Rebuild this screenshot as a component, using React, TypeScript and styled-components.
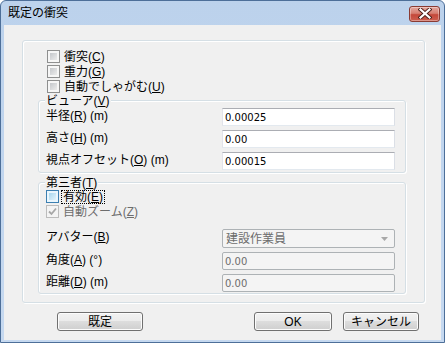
import styled, { createGlobalStyle, css } from 'styled-components';

const UI_FONT = `'Liberation Sans', 'Noto Sans CJK JP', sans-serif`;
const NUM_FONT = `'DejaVu Sans', 'Noto Sans CJK JP', sans-serif`;

type CheckVariant = 'normal' | 'hot' | 'disabledChecked';

const GlobalStyle = createGlobalStyle`
  * { box-sizing: border-box; }
  html, body { margin: 0; padding: 0; }
  body {
    background: #ffffff;
    font-family: ${UI_FONT};
    font-size: 12px;
    color: #000;
    overflow: hidden;
  }
`;

const Window = styled.div`
  width: 445px;
  height: 343px;
  display: flex;
  flex-direction: column;
  border: 1px solid #4d6f99;
  border-radius: 6px 6px 0 0;
  background: linear-gradient(#bcd2ec, #c6d9f0);
  overflow: hidden;
`;

const TitleBar = styled.div`
  height: 24px;
  flex: none;
  display: flex;
  align-items: center;
  justify-content: space-between;
  padding: 0 4px 0 7px;
`;

const Title = styled.span`
  font-size: 12px;
  line-height: 16px;
  color: #000;
`;

const CloseButton = styled.div`
  width: 31px;
  height: 16px;
  margin-top: 1px;
  display: flex;
  align-items: center;
  justify-content: center;
  border: 1px solid #8a3b33;
  border-radius: 3px;
  background: linear-gradient(#e4a79e 0%, #d77f72 45%, #c4483a 55%, #cd5f50 100%);
  box-shadow: inset 0 0 0 1px rgba(255, 255, 255, 0.35);
`;

const Client = styled.div`
  flex: 1;
  margin: 0 3px 2px;
  background: #f0f0f0;
  display: flex;
  flex-direction: column;
`;

const groupLine = css`
  border: 1px solid #d5dfe5;
  border-radius: 3px;
  box-shadow: inset 1px 1px 0 #ffffff, 1px 1px 0 #ffffff;
`;

const OuterGroup = styled.div`
  ${groupLine};
  width: 403px;
  height: 263px;
  margin: 15px 0 0 18px;
  padding: 9px 0 0 24px;
  display: flex;
  flex-direction: column;
`;

const GroupBox = styled.div<{ $height: number; $gap: number }>`
  ${groupLine};
  position: relative;
  width: 368px;
  height: ${({ $height }) => $height}px;
  margin: ${({ $gap }) => $gap}px 0 0 -9px;
  padding: 7px 10px 1px 7px;
`;

const Legend = styled.span`
  position: absolute;
  top: -7px;
  left: 6px;
  padding: 0 1px;
  background: #f0f0f0;
  line-height: 14px;
`;

const CheckRow = styled.div<{ $disabled?: boolean }>`
  height: 15px;
  display: flex;
  align-items: flex-start;
  gap: 2px;
  color: ${({ $disabled }) => ($disabled ? '#6d6d6d' : '#000')};
`;

const CheckBox = styled.span<{ $variant: CheckVariant }>`
  position: relative;
  flex: none;
  width: 13px;
  height: 13px;
  border: 1px solid #8e8f8f;
  background: #f6f6f6;
  display: flex;
  align-items: center;
  justify-content: center;

  &::after {
    content: '';
    position: absolute;
    inset: 2px;
    background: linear-gradient(135deg, #c4c7cb, #ececec);
  }

  ${({ $variant }) =>
    $variant === 'hot' &&
    css`
      border-color: #3c7fb1;
      background: #eaf6fd;
      &::after {
        background: linear-gradient(135deg, #a9d7ef, #e3f4fc);
      }
    `}

  ${({ $variant }) =>
    $variant === 'disabledChecked' &&
    css`
      border-color: #bcbcbc;
      background: #f4f4f4;
      &::after {
        display: none;
      }
    `}
`;

const CheckLabel = styled.span<{ $focused?: boolean }>`
  padding: 0 1px;
  border: 1px dotted ${({ $focused }) => ($focused ? '#000' : 'transparent')};
  line-height: 12px;
`;

const FieldGrid = styled.div<{ $top?: number }>`
  display: grid;
  grid-template-columns: 1fr 173px;
  row-gap: 4px;
  margin-top: ${({ $top }) => $top ?? 0}px;
  align-items: center;
`;

const FieldLabel = styled.span`
  line-height: 14px;
  padding-bottom: 3px;
`;

const TextBox = styled.input`
  width: 173px;
  height: 18px;
  margin: 0;
  padding: 0 0 0 2px;
  border: 1px solid;
  border-color: #abadb3 #dbdfe6 #e3e9ef #e2e3ea;
  border-radius: 0;
  background: #ffffff;
  color: #000;
  font-family: ${NUM_FONT};
  font-size: 10px;
  line-height: 16px;
  outline: none;

  &:disabled {
    border-color: #adb2b5;
    border-radius: 2px;
    background: #f4f4f4;
    color: #6d6d6d;
  }
`;

const ComboBox = styled.div`
  width: 173px;
  height: 19px;
  display: flex;
  align-items: center;
  justify-content: space-between;
  padding: 0 6px 0 3px;
  border: 1px solid #adb2b5;
  border-radius: 2px;
  background: #f4f4f4;
  color: #6d6d6d;
  line-height: 16px;
`;

const ButtonRow = styled.div`
  display: flex;
  align-items: center;
  gap: 11px;
  margin-top: 9px;
  padding: 0 22px 0 53px;
`;

const Button = styled.div<{ $width: number; $push?: boolean }>`
  width: ${({ $width }) => $width}px;
  height: 19px;
  margin-left: ${({ $push }) => ($push ? 'auto' : '0')};
  display: flex;
  align-items: center;
  justify-content: center;
  border: 1px solid #707070;
  border-radius: 3px;
  background: linear-gradient(#f2f2f2 0%, #ebebeb 50%, #dddddd 50%, #cfcfcf 100%);
  box-shadow: inset 0 0 0 1px #fcfcfc;
  line-height: 16px;
`;

const Mnemonic = ({ k }: { k: string }) => (
  <>
    (<u>{k}</u>)
  </>
);

const CheckMark = () => (
  <svg width="9" height="9" viewBox="0 0 9 9">
    <path d="M1 4.5 L3.5 7 L8 1.5" fill="none" stroke="#a7a7a7" strokeWidth="1.8" />
  </svg>
);

const CloseGlyph = () => (
  <svg width="14" height="11" viewBox="0 0 14 11">
    <path d="M2.5 1.5 L11.5 9.5 M11.5 1.5 L2.5 9.5" stroke="#4b1f1a" strokeWidth="4" strokeLinecap="square" />
    <path d="M2.5 1.5 L11.5 9.5 M11.5 1.5 L2.5 9.5" stroke="#ffffff" strokeWidth="2.2" strokeLinecap="square" />
  </svg>
);

const ComboArrow = () => (
  <svg width="7" height="4" viewBox="0 0 7 4">
    <path d="M0 0 H7 L3.5 4 Z" fill="#a8a8a8" />
  </svg>
);

const Check = ({
  label,
  k,
  variant = 'normal',
  focused,
}: {
  label: string;
  k: string;
  variant?: CheckVariant;
  focused?: boolean;
}) => (
  <CheckRow $disabled={variant === 'disabledChecked'}>
    <CheckBox $variant={variant}>{variant === 'disabledChecked' && <CheckMark />}</CheckBox>
    <CheckLabel $focused={focused}>
      {label}
      <Mnemonic k={k} />
    </CheckLabel>
  </CheckRow>
);

export default function App() {
  return (
    <>
      <GlobalStyle />
      <Window>
        <TitleBar>
          <Title>既定の衝突</Title>
          <CloseButton>
            <CloseGlyph />
          </CloseButton>
        </TitleBar>
        <Client>
          <OuterGroup>
            <Check label="衝突" k="C" />
            <Check label="重力" k="G" />
            <Check label="自動でしゃがむ" k="U" />

            <GroupBox $height={73} $gap={5}>
              <Legend>
                ビューア<Mnemonic k="V" />
              </Legend>
              <FieldGrid>
                <FieldLabel>
                  半径<Mnemonic k="R" /> (m)
                </FieldLabel>
                <TextBox readOnly value="0.00025" />
                <FieldLabel>
                  高さ<Mnemonic k="H" /> (m)
                </FieldLabel>
                <TextBox readOnly value="0.00" />
                <FieldLabel>
                  視点オフセット<Mnemonic k="O" /> (m)
                </FieldLabel>
                <TextBox readOnly value="0.00015" />
              </FieldGrid>
            </GroupBox>

            <GroupBox $height={112} $gap={9}>
              <Legend>
                第三者<Mnemonic k="T" />
              </Legend>
              <Check label="有効" k="E" variant="hot" focused />
              <Check label="自動ズーム" k="Z" variant="disabledChecked" />
              <FieldGrid $top={9}>
                <FieldLabel>
                  アバター<Mnemonic k="B" />
                </FieldLabel>
                <ComboBox>
                  建設作業員
                  <ComboArrow />
                </ComboBox>
                <FieldLabel>
                  角度<Mnemonic k="A" /> (°)
                </FieldLabel>
                <TextBox disabled value="0.00" />
                <FieldLabel>
                  距離<Mnemonic k="D" /> (m)
                </FieldLabel>
                <TextBox disabled value="0.00" />
              </FieldGrid>
            </GroupBox>
          </OuterGroup>

          <ButtonRow>
            <Button $width={86}>既定</Button>
            <Button $width={78} $push>
              OK
            </Button>
            <Button $width={76}>キャンセル</Button>
          </ButtonRow>
        </Client>
      </Window>
    </>
  );
}
